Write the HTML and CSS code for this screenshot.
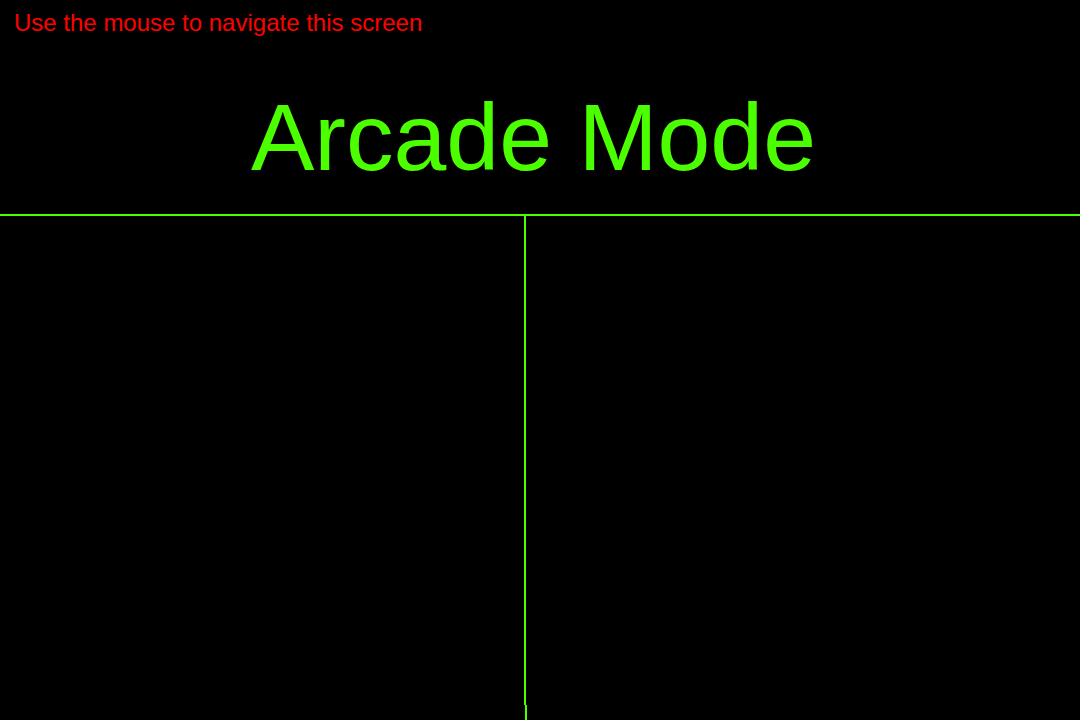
FILE: index.html
```html
<!DOCTYPE html>
<html>
<head>
    <title>Arcade Mode</title>
    <link rel="stylesheet" href="styles.css">
</head>
<body>
  <div class="screen">
    <p class="hint">Use the mouse to navigate this screen</p>
    <h1 class="title">Arcade Mode</h1>

    <div class="board">
      <div class="panes">
        <div class="pane pane-left"></div>
        <div class="pane pane-right"></div>
      </div>
      <div class="panes-foot">
        <div class="pane pane-left"></div>
        <div class="pane pane-right"></div>
      </div>
    </div>
  </div>
</body>
</html>
```

FILE: styles.css
```css
/* Resetting default margin and padding */
body, h1, p {
    margin: 0;
    padding: 0;
}

body {
    background-color: #000000;
    font-family: "Liberation Sans", Arial, sans-serif;
    height: 720px;
    overflow: hidden;
}

.screen {
    display: flex;
    flex-direction: column;
    height: 720px;
}

/* Top hint text */
.hint {
    color: #ff0000;
    font-size: 24px;
    line-height: 28px;
    padding: 9px 0 0 14px;
}

/* Big heading */
.title {
    color: #4cff00;
    font-size: 95px;
    font-weight: normal;
    line-height: 110px;
    margin-top: 45px;
    padding-left: 251px;
}

/* Split board below the heading */
.board {
    flex: 1;
    display: flex;
    flex-direction: column;
    margin-top: 22px;
    border-top: 2px solid #4cff00;
}

.panes {
    flex: 1;
    display: grid;
    grid-template-columns: 526px 1fr;
}

.panes-foot {
    height: 15px;
    display: grid;
    grid-template-columns: 527px 1fr;
}

.pane-left {
    border-right: 2px solid #4cff00;
}
```
